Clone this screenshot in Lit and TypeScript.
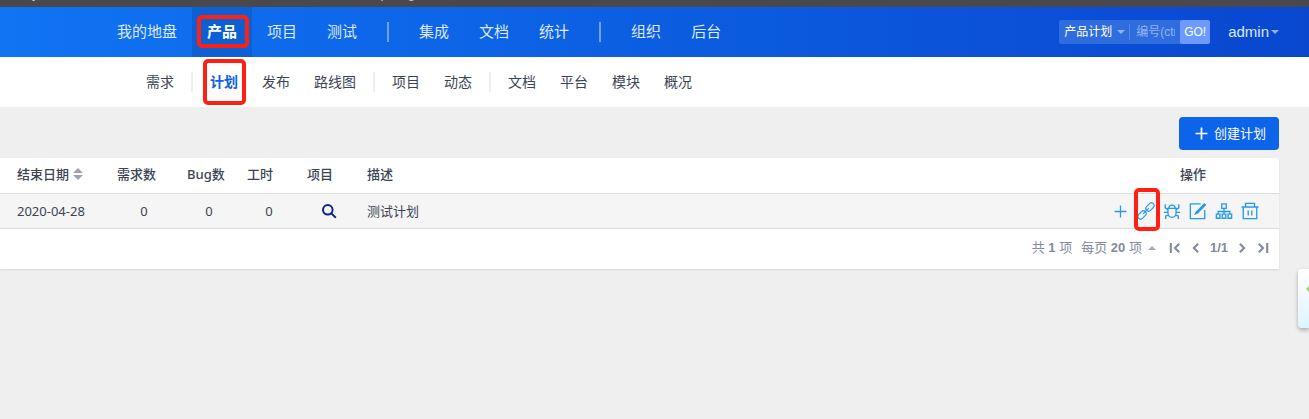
import { LitElement, html, css, svg } from "lit";
import { customElement } from "lit/decorators.js";

const icon = (size: number, body: unknown) =>
  html`<svg class="icon" width=${size} height=${size} viewBox="0 0 20 20" aria-hidden="true">${body}</svg>`;

const plus = svg`<path d="M10 3v14M3 10h14"/>`;
const link = svg`<g transform="rotate(-45 10 10)" stroke-width="1.300"><rect x="-1.500" y="7" width="10.500" height="6" rx="3"/><rect x="11" y="7" width="10.500" height="6" rx="3"/><path d="M5.500 10h9"/></g>`;
const bug = svg`<path d="M5.500 7h9v5.500a4.500 4.500 0 0 1-9 0zM6.500 7a3.500 3.500 0 0 1 7 0M5.500 11.500H1M14.500 11.500H19M5.500 8.500L2.500 6.500V2.500M14.500 8.500L17.500 6.500V2.500M6.500 14.500L3 15.500V19M13.500 14.500L17 15.500V19"/>`;
const edit = svg`<path d="M13 2H1.500V18.500H17.500V9"/><path class="fill" d="M17 1l2.200 2.200L9.500 13l-3.700 1.500L7.200 11z"/>`;
const sitemap = svg`<path d="M7.500 2h5v5h-5zM1.500 13.500h4v4.500h-4zM8 13.500h4v4.500H8zM14.500 13.500h4v4.500h-4zM10 7v6.500M3.500 13.500V10.500h13v3"/>`;
const trash = svg`<path d="M.5 5.500h19M5 5V1.500h10V5M2.500 5.500V18.500h15V5.500M8 9.500v5.500M12 9.500v5.500"/>`;
const search = svg`<circle cx="8.500" cy="8.500" r="6"/><path d="M13 13l5.500 5.500"/>`;

const mainNav = [["我的地盘", "产品", "项目", "测试"], ["集成", "文档", "统计"], ["组织", "后台"]];
const subNav = [["需求"], ["计划", "发布", "路线图"], ["项目", "动态"], ["文档", "平台", "模块", "概况"]];
const actions = [
  { name: "创建子计划", body: plus, size: 17 },
  { name: "关联需求", body: link, size: 18, marked: true },
  { name: "关联Bug", body: bug, size: 18 },
  { name: "编辑", body: edit, size: 18 },
  { name: "分解", body: sitemap, size: 18 },
  { name: "删除", body: trash, size: 18 },
];

@customElement("app-root")
export class AppRoot extends LitElement {
  static styles = css`
    :host {
      display: block;
      min-height: 100vh;
      position: relative;
      overflow: hidden;
      background: #efefef;
      color: #3c4353;
      font: 13px/20px "Liberation Sans", "Noto Sans CJK SC", sans-serif;
    }
    * { box-sizing: border-box; }
    a { color: inherit; text-decoration: none; }
    button, input, select { font: inherit; color: inherit; border: 0; margin: 0; padding: 0; background: none; border-radius: 0; }
    .icon { display: block; fill: none; stroke: currentColor; stroke-width: 1.5; flex: none; }
    .icon .fill { fill: currentColor; stroke: none; }
    .strip { display: flex; align-items: flex-end; height: 7px; padding: 0 0 5px 32px; overflow: hidden; background: #48484d; color: #c8c8cc; }
    .strip span { line-height: 16px; }
    .strip .p { margin-left: 342px; }
    .strip .g { margin-left: 20px; }
    .header {
      display: flex;
      align-items: center;
      height: 50px;
      padding: 0 30px 0 102px;
      background: linear-gradient(90deg, #1074f3, #0947cf);
      color: #dce9ff;
      font-size: 15px;
    }
    .nav { display: flex; align-items: center; flex: 1; }
    .nav a { position: relative; padding: 0 15px; line-height: 50px; }
    .nav .active { background: #0d60d3; color: #fff; font-weight: bold; }
    .nav .sep { width: 2px; height: 20px; margin: 0 15px; background: #6fa3f5; }
    .sub { display: flex; align-items: center; height: 50px; padding-left: 134px; background: #fff; font-size: 14px; }
    .sub a { position: relative; padding: 0 12px; line-height: 50px; }
    .sub .active { color: #0c60e8; font-weight: bold; }
    .sub .sep { width: 2px; height: 20px; margin: 0 5px; background: #eee; }
    .mark { position: absolute; border: 4px solid #ff2013; border-radius: 5px; pointer-events: none; }
    .nav .mark { inset: 8px 3px 9px 5px; }
    .sub .mark { inset: 2px 4px 2px 5px; }
    .act .mark { inset: -13px -1px -10px 1px; }
    .searchbox { display: flex; align-items: center; height: 24px; margin-bottom: 1px; border-radius: 2px; background: #2f6cdd; font-size: 12px; overflow: hidden; }
    .pick { display: flex; align-items: center; gap: 5px; height: 16px; padding: 0 4px 0 5px; border-right: 1px solid #5487e3; color: #fff; }
    .pick select { appearance: none; width: 48px; line-height: 16px; outline: 0; }
    .pick option { color: #3c4353; }
    .caret { width: 0; height: 0; border: 4px solid transparent; border-bottom: 0; border-top-color: #8fb2f0; }
    .caret.up { border: 4px solid transparent; border-top: 0; border-bottom-color: #a6aaba; }
    .searchbox input { width: 50px; padding: 0 5px 0 6px; outline: 0; }
    .searchbox input::placeholder { color: #93b6f2; opacity: 1; }
    .go { width: 30px; height: 24px; border-radius: 2px; background: #6c9aff; color: #fff; }
    .user { display: flex; align-items: center; gap: 2px; margin-left: 18px; }
    .toolbar { display: flex; justify-content: flex-end; padding: 10px 30px 8px; }
    .create { display: flex; align-items: center; gap: 4px; height: 33px; padding: 0 13px 0 14px; border-radius: 4px; background: #0c64eb; color: #fff; }
    .create .icon { stroke-width: 2; }
    .panel { margin-right: 30px; background: #fff; border-radius: 0 4px 0 0; box-shadow: 0 1px 2px rgba(0, 0, 0, 0.1); }
    table { width: 100%; border-collapse: separate; border-spacing: 0; table-layout: fixed; font-family: "Noto Sans", "Noto Sans CJK SC", sans-serif; }
    th, td { padding: 0 8px; text-align: left; border-bottom: 1px solid #dcdcdc; }
    th { height: 36px; padding-bottom: 3px; font-weight: 500; }
    td { height: 35px; background: #f5f5f5; }
    th:first-child, td:first-child { padding-left: 17px; }
    .date { width: 109px; }
    .stories { width: 70px; }
    .count { width: 60px; }
    .ops { width: 172px; text-align: center; }
    .num { text-align: center; }
    .num a { display: flex; justify-content: center; color: #10238f; }
    .num .icon { stroke-width: 2.5; }
    .sortable { display: flex; align-items: center; gap: 4px; }
    .sort { display: flex; flex-direction: column; gap: 2px; }
    .sort .caret { border-width: 5px; border-top-color: #9ea3b0; border-bottom-width: 0; }
    .sort .up { border-width: 5px; border-top-width: 0; border-color: transparent transparent #9ea3b0; }
    .acts { display: flex; }
    td.acts-cell { padding: 0; }
    .act { position: relative; display: flex; align-items: center; justify-content: center; width: 26px; height: 20px; color: #2499ee; cursor: pointer; }
    .pager { display: flex; align-items: center; justify-content: flex-end; height: 40px; padding: 0 9px 2px 0; color: #838a9d; }
    .pager .icon { stroke-width: 3; }
    .pager button { display: flex; align-items: center; }
    .pager .size { gap: 6px; margin: 0 12px 0 9px; }
    .pages { display: flex; align-items: center; gap: 7px; }
    .float { position: absolute; right: 0; top: 269px; width: 11px; height: 59px; border-radius: 4px 0 0 4px; background: linear-gradient(#fff, #dff3ff); box-shadow: 0 2px 4px rgba(0, 0, 0, 0.3); color: #a0d468; }
    .float svg { position: absolute; right: 0; top: 17px; fill: currentColor; }
  `;

  private menu(groups: string[][], current: string) {
    return groups.map(
      (group, i) => html`${i ? html`<span class="sep"></span>` : ""}${group.map(
        (name) => html`<a href="#" class=${name === current ? "active" : ""}>${name}${name === current ? html`<span class="mark"></span>` : ""}</a>`
      )}`
    );
  }

  render() {
    return html`
      <div class="strip"><span>y</span><span class="p">p</span><span class="g">g</span></div>
      <header class="header">
        <nav class="nav">${this.menu(mainNav, "产品")}</nav>
        <form class="searchbox" @submit=${(e: Event) => e.preventDefault()}>
          <label class="pick"><select aria-label="搜索类型"><option>产品计划</option></select><span class="caret"></span></label>
          <input type="text" aria-label="编号" placeholder="编号(ctrl+g)" />
          <button class="go">GO!</button>
        </form>
        <a href="#" class="user">admin<span class="caret"></span></a>
      </header>
      <nav class="sub">${this.menu(subNav, "计划")}</nav>
      <main>
        <div class="toolbar"><button class="create">${icon(17, plus)}创建计划</button></div>
        <section class="panel">
          <table>
            <thead>
              <tr>
                <th class="date"><a href="#" class="sortable">结束日期<span class="sort"><span class="caret up"></span><span class="caret"></span></span></a></th>
                <th class="stories">需求数</th>
                <th class="count">Bug数</th>
                <th class="count">工时</th>
                <th class="count">项目</th>
                <th>描述</th>
                <th class="ops">操作</th>
              </tr>
            </thead>
            <tbody>
              <tr>
                <td>2020-04-28</td>
                <td class="num">0</td>
                <td class="num">0</td>
                <td class="num">0</td>
                <td class="num"><a href="#" aria-label="项目">${icon(16, search)}</a></td>
                <td>测试计划</td>
                <td class="acts-cell">
                  <div class="acts">
                    ${actions.map((a) => html`<button class="act" aria-label=${a.name}>${icon(a.size, a.body)}${a.marked ? html`<span class="mark"></span>` : ""}</button>`)}
                  </div>
                </td>
              </tr>
            </tbody>
          </table>
          <footer class="pager">
            <span>共 <b>1</b> 项</span>
            <button class="size"><span>每页 <b>20</b> 项</span><span class="caret up"></span></button>
            <div class="pages">
              <button aria-label="首页">${icon(14, svg`<path d="M4 3v14M16 4l-6 6 6 6"/>`)}</button>
              <button aria-label="上一页">${icon(14, svg`<path d="M13 4l-6 6 6 6"/>`)}</button>
              <b>1/1</b>
              <button aria-label="下一页">${icon(14, svg`<path d="M7 4l6 6-6 6"/>`)}</button>
              <button aria-label="末页">${icon(14, svg`<path d="M16 3v14M4 4l6 6-6 6"/>`)}</button>
            </div>
          </footer>
        </section>
      </main>
      <aside class="float"><svg width="3" height="6" viewBox="0 0 3 6"><path d="M0 3L3 0V6z"/></svg></aside>
    `;
  }
}
